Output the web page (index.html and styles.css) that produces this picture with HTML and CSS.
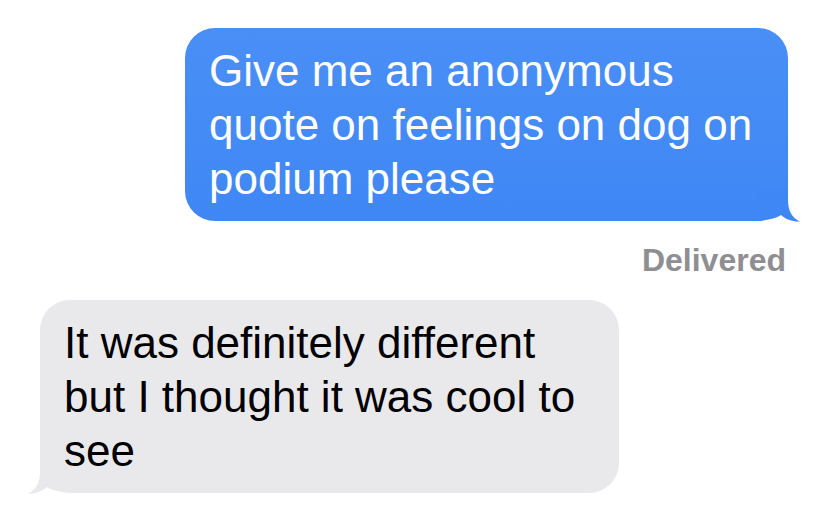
FILE: index.html
```html
<!doctype html>
<html lang="en">
	<head>
		<title>Messages</title>
		<meta charset="utf-8">
		<meta name="viewport" content="width=device-width, user-scalable=no, minimum-scale=1.0, maximum-scale=1.0">

		<link rel="stylesheet" href="styles.css">
	</head>
	<body>
<div class="thread">

	<div class="bubble sent">
		<p>Give me an anonymous quote on feelings on dog on podium please</p>
		<svg class="tail" width="42" height="34" viewBox="0 0 42 34">
			<path d="M0 32 V0 H30 V12 C30 23 34 30 42 33.5 C35 34 28 31.5 23 27 C18 30.5 11 32 0 32 Z" />
		</svg>
	</div>

	<div class="status">Delivered</div>

	<div class="bubble received">
		<p>It was definitely different but I thought it was cool to see</p>
		<svg class="tail" width="42" height="34" viewBox="0 0 42 34">
			<path d="M0 32 V0 H30 V12 C30 23 34 30 42 33.5 C35 34 28 31.5 23 27 C18 30.5 11 32 0 32 Z" />
		</svg>
	</div>

</div>
	</body>
</html>
```

FILE: styles.css
```css
*{
	box-sizing: border-box;
	margin: 0;
	padding: 0;
}
html {
	height: 100%;
}
body {
	margin: 0;
	background-color: #ffffff;
	font-family: 'Liberation Sans', Arial, sans-serif;
	color: #000000;
	height: 100%;
	overflow: hidden;
}
.thread{ display: flex; flex-direction: column; padding: 28px 40px 0 40px; }

.bubble{ position: relative; border-radius: 30px; padding: 16px 24px 15px 24px; font-size: 44px; line-height: 54px; }
.bubble p{ position: relative; z-index: 1; }

.sent{ align-self: flex-end; width: 603px; background: linear-gradient( #4a8ff6, #3f87f5 ); color: #ffffff; }
.sent .tail{ position: absolute; right: -12px; bottom: -1px; fill: #3f87f5; }

.received{ align-self: flex-start; width: 579px; margin-top: 21px; background-color: #e9e9eb; color: #000000; }
.received .tail{ position: absolute; left: -12px; bottom: -1px; fill: #e9e9eb; transform: scaleX( -1 ); }

.status{ align-self: flex-end; margin: 20px 2px 0 0; font-size: 32px; line-height: 38px; font-weight: bold; color: #8e8e93; }
```
